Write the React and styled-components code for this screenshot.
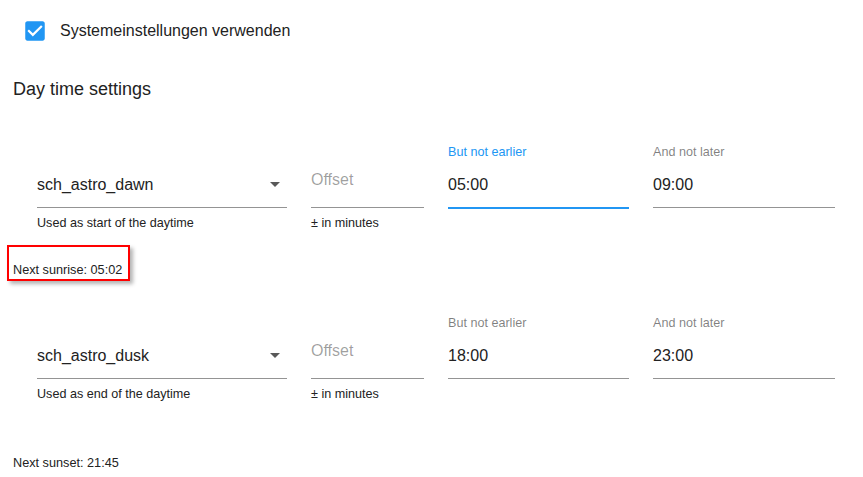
import React from "react";
import styled, { createGlobalStyle } from "styled-components";

const GlobalStyle = createGlobalStyle`
  body {
    margin: 0;
    background: #fff;
    font-family: "Liberation Sans", Arial, sans-serif;
    color: rgba(0, 0, 0, 0.87);
  }
`;

const Page = styled.div`
  padding: 18px 13px 0;
`;

const CheckRow = styled.label`
  display: flex;
  align-items: center;
  margin-left: 9px;
  height: 26px;
  font-size: 16px;
  color: #222;
`;

const CheckIcon = styled.svg`
  width: 26px;
  height: 26px;
  fill: #2196f3;
  margin-right: 12px;
`;

const Title = styled.h2`
  margin: 34px 0 0;
  font-size: 18px;
  line-height: 22px;
  font-weight: 400;
  color: #222;
`;

const FieldRow = styled.div`
  display: flex;
  gap: 24px;
  margin: ${(p) => p.$top}px 0 0 24px;
`;

const Field = styled.div`
  width: ${(p) => p.$width}px;
  display: flex;
  flex-direction: column;
`;

const Label = styled.div`
  height: 14px;
  font-size: 12.6px;
  line-height: 14px;
  margin: 2px 0 16px;
  color: ${(p) => (p.$focused ? "#2196f3" : "rgba(0, 0, 0, 0.5)")};
`;

const InputBox = styled.div`
  display: flex;
  align-items: flex-start;
  justify-content: space-between;
  height: 19px;
  padding-bottom: 13px;
  font-size: 16px;
  line-height: 19px;
  color: #222;
  border-bottom: ${(p) => (p.$focused ? "2px solid #2196f3" : "1px solid rgba(0, 0, 0, 0.42)")};
  margin-bottom: ${(p) => (p.$focused ? "-1px" : "0")};
`;

const Placeholder = styled.span`
  margin-top: -5px;
  color: rgba(0, 0, 0, 0.38);
`;

const Arrow = styled.svg`
  width: 24px;
  height: 24px;
  margin: -3px 0 0;
  fill: rgba(0, 0, 0, 0.65);
`;

const Helper = styled.div`
  margin-top: 5px;
  font-size: 12.6px;
  line-height: 20px;
  color: #222;
  min-height: 20px;
`;

const NextLine = styled.div`
  font-size: 12.7px;
  line-height: 14px;
  color: #222;
  margin-top: ${(p) => p.$top}px;
`;

const Highlight = styled.span`
  display: inline-block;
  margin-left: -6px;
  padding: 16px 6px 2px 4px;
  border: 2px solid #f00;
  box-shadow: 3px 3px 4px rgba(0, 0, 0, 0.3);
`;

const Select = ({ value, helper }) => (
  <Field $width={250}>
    <Label />
    <InputBox>
      <span>{value}</span>
      <Arrow viewBox="0 0 24 24">
        <path d="M7 10l5 5 5-5z" />
      </Arrow>
    </InputBox>
    <Helper>{helper}</Helper>
  </Field>
);

const TimeField = ({ label, value, focused, width }) => (
  <Field $width={width}>
    <Label $focused={focused}>{label}</Label>
    <InputBox $focused={focused}>{value}</InputBox>
    <Helper />
  </Field>
);

const Row = ({ top, select, helper, from, to, focused }) => (
  <FieldRow $top={top}>
    <Select value={select} helper={helper} />
    <Field $width={113}>
      <Label />
      <InputBox>
        <Placeholder>Offset</Placeholder>
      </InputBox>
      <Helper>± in minutes</Helper>
    </Field>
    <TimeField label="But not earlier" value={from} focused={focused} width={181} />
    <TimeField label="And not later" value={to} width={182} />
  </FieldRow>
);

export default function App() {
  return (
    <Page>
      <GlobalStyle />
      <CheckRow>
        <CheckIcon viewBox="0 0 24 24">
          <path d="M19 3H5c-1.11 0-2 .9-2 2v14c0 1.1.89 2 2 2h14c1.11 0 2-.9 2-2V5c0-1.1-.89-2-2-2zm-9 14l-5-5 1.41-1.41L10 14.17l7.59-7.59L19 8l-9 9z" />
        </CheckIcon>
        Systemeinstellungen verwenden
      </CheckRow>
      <Title>Day time settings</Title>
      <Row
        top={43}
        select="sch_astro_dawn"
        helper="Used as start of the daytime"
        from="05:00"
        to="09:00"
        focused
      />
      <NextLine $top={12}>
        <Highlight>Next sunrise: 05:02</Highlight>
      </NextLine>
      <Row
        top={33}
        select="sch_astro_dusk"
        helper="Used as end of the daytime"
        from="18:00"
        to="23:00"
      />
      <NextLine $top={52}>Next sunset: 21:45</NextLine>
    </Page>
  );
}
